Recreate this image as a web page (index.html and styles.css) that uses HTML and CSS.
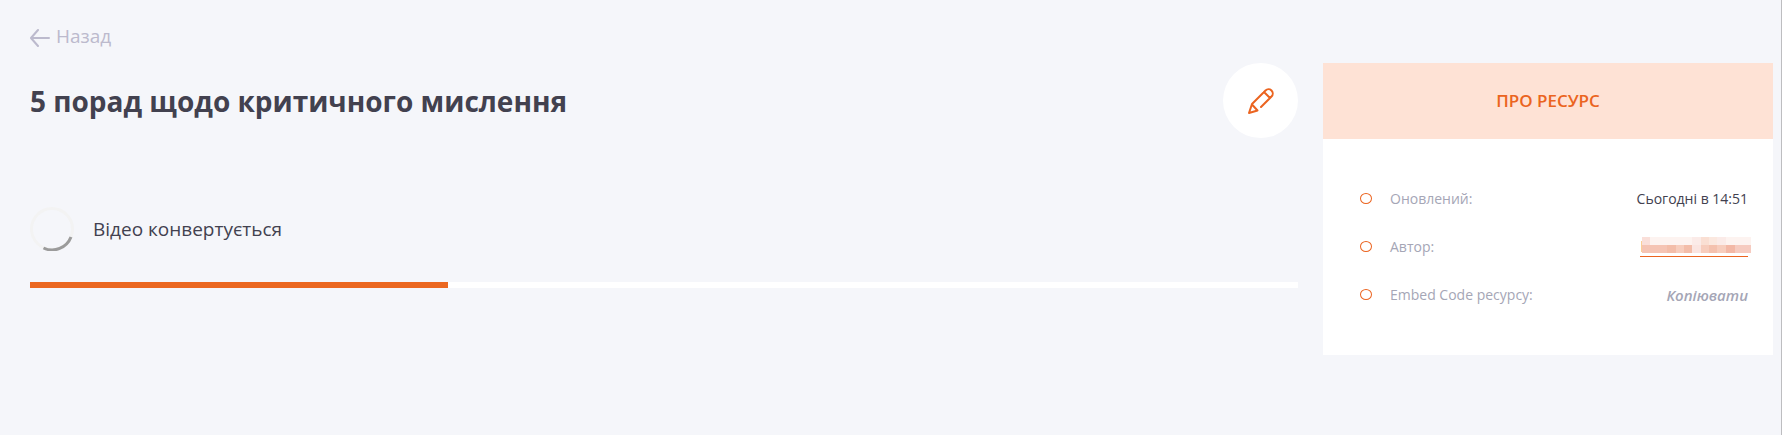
FILE: index.html
```html
<!DOCTYPE html>
<html lang="uk">
<head>
  <meta charset="UTF-8" />
  <meta name="viewport" content="width=device-width, initial-scale=1.0"/>
  <title>5 порад щодо критичного мислення</title>
  <link rel="stylesheet" href="styles.css">
</head>
<body>

  <div class="page">
    <a href="#" class="back-link">
      <svg class="back-icon" width="20" height="18" viewBox="0 0 20 18" fill="none" stroke="currentColor" stroke-width="2" stroke-linecap="round" stroke-linejoin="round">
        <path d="M19 9H1M8 1L1 9l7 8"/>
      </svg>
      <span>Назад</span>
    </a>

    <div class="columns">
      <!-- RESOURCE -->
      <main class="resource">
        <div class="resource-header">
          <h1>5 порад щодо критичного мислення</h1>
          <button class="edit-btn" type="button" aria-label="Редагувати">
            <svg width="26" height="26" viewBox="0 0 26 26" fill="none" stroke="currentColor" stroke-width="2" stroke-linecap="round" stroke-linejoin="round">
              <path d="M13 19L23.500 8.500a4.200 4.200 0 0 0-6-6L4 16L1 25l8.500-2.500L4 16.500M16 4l6 6"/>
            </svg>
          </button>
        </div>

        <div class="status">
          <svg class="spinner" width="44" height="44" viewBox="0 0 44 44" fill="none">
            <circle cx="22" cy="22" r="20.500" stroke="#f3f3f3" stroke-width="3"/>
            <path d="M41 30A20.300 20.300 0 0 1 13.500 41" stroke="#9b9b9b" stroke-width="3"/>
          </svg>
          <span>Відео конвертується</span>
        </div>
        <div class="progress">
          <div class="progress-bar" style="width: 33%"></div>
        </div>
      </main>

      <!-- ABOUT -->
      <aside class="about">
        <h2>Про ресурс</h2>
        <ul class="about-list">
          <li>
            <span class="label">Оновлений:</span>
            <span class="value">Сьогодні в 14:51</span>
          </li>
          <li>
            <span class="label">Автор:</span>
            <a href="#" class="author" aria-label="Автор">
              <svg width="111" height="16" viewBox="0 0 111 16" shape-rendering="crispEdges">
                <path fill="#fbcf96" d="M1 4h1v11H1z"/>
                <path fill="#fadfd9" d="M2 0h8v8H2z"/>
                <path fill="#fdf3f0" d="M10 0h51v8H10zM86 0h25v8H86z"/>
                <path fill="#fbebe8" d="M52 0h9v8h-9zM77 0h9v8h-9z"/>
                <path fill="#fadfd3" d="M61 0h8v8h-8z"/>
                <path fill="#fbe8df" d="M69 0h8v8h-8z"/>
                <path fill="#f5c4b4" d="M2 8h50v8H2z"/>
                <path fill="#f3bda9" d="M27 8h9v8h-9zM44 8h8v8h-8z"/>
                <path fill="#f7cdbd" d="M36 8h8v8h-8zM61 8h25v8H61z"/>
                <path fill="#fae5e1" d="M52 8h9v8h-9z"/>
                <path fill="#f4c1ae" d="M69 8h8v8h-8z"/>
                <path fill="#f3b8a6" d="M86 8h9v8h-9z"/>
                <path fill="#f6cbc0" d="M95 8h16v8H95z"/>
              </svg>
            </a>
          </li>
          <li>
            <span class="label">Embed Code ресурсу:</span>
            <button class="copy-btn" type="button">Копіювати</button>
          </li>
        </ul>
      </aside>
    </div>
  </div>

</body>
</html>
```
FILE: styles.css
```css
*, *::before { box-sizing: border-box; }
body { margin: 0; background: #f5f6fa; color: #42414f; font-family: "Segoe UI", "Open Sans", sans-serif; font-size: 14px; }
h1, h2 { margin: 0; }
button { font: inherit; border: none; padding: 0; cursor: pointer; }

.page { min-height: 100vh; padding: 23px 8px 24px 30px; border-right: 1px solid #bdbdc0; }
.back-link { display: flex; align-items: center; gap: 6px; width: fit-content; height: 26px; color: #bcbacd; font-size: 19px; line-height: 24px; text-decoration: none; }
.back-icon { margin-top: 3px; }

.columns { display: flex; align-items: flex-start; gap: 25px; margin-top: 14px; }
.resource { flex: 1; min-width: 0; }
.resource-header { display: flex; align-items: center; justify-content: space-between; }
h1 { font-size: 28px; line-height: 40px; font-weight: 700; }
.edit-btn { display: flex; align-items: center; justify-content: center; flex: none; width: 75px; height: 75px; border-radius: 50%; background: #fff; color: #eb6420; }

.status { display: flex; align-items: center; gap: 19px; margin-top: 69px; font-size: 19px; line-height: 28px; }
.progress { height: 6px; margin-top: 31px; background: #fff; }
.progress-bar { height: 100%; background: #eb6720; }

.about { flex: none; width: 450px; background: #fff; }
.about h2 { padding: 26px 20px; background: #fee2d5; color: #eb6420; font-size: 17px; line-height: 24px; font-weight: 600; text-align: center; text-transform: uppercase; }
.about-list { display: flex; flex-direction: column; gap: 24px; margin: 0; padding: 48px 25px 48px 37px; list-style: none; }
.about-list li { display: flex; align-items: center; height: 24px; line-height: 24px; }
.about-list li::before { content: ""; width: 12px; height: 11px; margin: 0 18px 2px 0; border: 1px solid #eb6420; border-radius: 50%; }
.label { flex: 1; color: #a5a6b6; }
.value { font-weight: 500; }
.author { display: flex; width: 108px; padding-bottom: 3px; border-bottom: 1px solid #eb6420; }
.author svg { flex: none; }
.copy-btn { background: none; color: #a5a6b6; font-size: 15px; font-weight: 600; font-style: italic; }
```
